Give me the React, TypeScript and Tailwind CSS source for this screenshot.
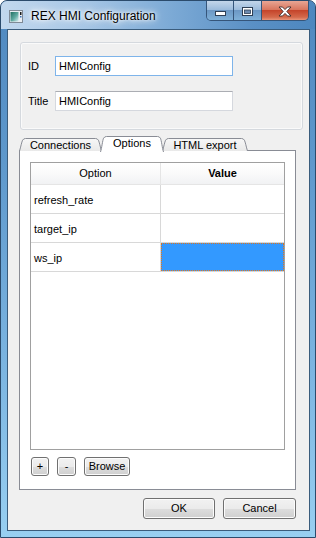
import React from "react";

const FONT = { fontFamily: '"Liberation Sans", Arial, sans-serif' };

function TabShape({ w, h, selected }: { w: number; h: number; selected?: boolean }) {
  const d = `M0.5 ${h} C1.8 ${h - 4} 2.6 4 3.6 2.2 Q4.6 0.5 6.5 0.5 H${w - 6.5} Q${w - 4.6} 0.5 ${w - 3.6} 2.2 C${w - 2.6} 4 ${w - 1.8} ${h - 4} ${w - 0.5} ${h}`;
  const id = selected ? "tabSel" : "tabIn";
  return (
    <svg className="absolute inset-0" width={w} height={h} viewBox={`0 0 ${w} ${h}`}>
      <defs>
        <linearGradient id={id} x1="0" y1="0" x2="0" y2="1">
          <stop offset="0" stopColor={selected ? "#ffffff" : "#f7f7f7"} />
          <stop offset="1" stopColor={selected ? "#ffffff" : "#e9e9e9"} />
        </linearGradient>
      </defs>
      <path d={d + ` V${h} H0.5 Z`} fill={`url(#${id})`} stroke="none" />
      <path d={d} fill="none" stroke="#898c95" strokeWidth="1" />
    </svg>
  );
}

function Tab({ label, w, selected, className }: { label: string; w: number; selected?: boolean; className?: string }) {
  const h = selected ? 16 : 13;
  return (
    <div className={`relative flex items-center justify-center ${className ?? ""}`} style={{ width: w, height: h }}>
      <TabShape w={w} h={h} selected={selected} />
      <span className={`relative text-[11px] leading-none text-black ${selected ? "-mt-[1px]" : "mt-[1px]"}`}>{label}</span>
    </div>
  );
}

function Btn({ children, className }: { children: React.ReactNode; className?: string }) {
  return (
    <div
      className={`flex items-center justify-center rounded-[3px] border border-[#707070] text-[11px] leading-none text-black bg-[linear-gradient(to_bottom,#f2f2f2_0%,#ebebeb_50%,#dddddd_51%,#cfcfcf_100%)] shadow-[inset_0_0_0_1px_#fcfcfc] ${className ?? ""}`}
    >
      {children}
    </div>
  );
}

function CaptionButtons() {
  return (
    <div className="flex h-[20px] self-start mr-[6px] rounded-b-[5px] border border-t-0 border-[#35557a] overflow-hidden">
      <div className="w-[27px] h-full flex items-center justify-center border-r border-[#35557a] bg-[linear-gradient(to_bottom,#c3d6ea_0%,#9dbcdc_45%,#6c98c5_50%,#7fb0d8_100%)]">
        <svg width="11" height="5" viewBox="0 0 11 5" className="mt-[5px]">
          <rect x="0.5" y="0.5" width="10" height="4" fill="#ffffff" stroke="#2e3f55" />
        </svg>
      </div>
      <div className="w-[28px] h-full flex items-center justify-center border-r border-[#35557a] bg-[linear-gradient(to_bottom,#c3d6ea_0%,#9dbcdc_45%,#6c98c5_50%,#7fb0d8_100%)]">
        <svg width="11" height="9" viewBox="0 0 11 9" className="mt-[1px]">
          <rect x="0.5" y="0.5" width="10" height="8" fill="#ffffff" stroke="#2e3f55" />
          <rect x="2.5" y="3" width="6" height="3.5" fill="#6d8bb0" stroke="#2e3f55" strokeWidth="0.8" />
        </svg>
      </div>
      <div className="w-[46px] h-full flex items-center justify-center bg-[linear-gradient(to_bottom,#e8a694_0%,#d9775f_45%,#c5452b_50%,#d4694b_85%,#e8957a_100%)]">
        <svg width="14" height="11" viewBox="0 0 14 11" className="mt-[1px]">
          <path
            d="M1 1 H4.5 L7 3.6 L9.5 1 H13 L8.8 5.5 L13 10 H9.5 L7 7.4 L4.5 10 H1 L5.2 5.5 Z"
            fill="#ffffff"
            stroke="#3b2a2a"
            strokeWidth="0.9"
            strokeLinejoin="round"
          />
        </svg>
      </div>
    </div>
  );
}

function AppIcon() {
  return (
    <svg width="14" height="13" viewBox="0 0 14 13">
      <defs>
        <linearGradient id="ai" x1="0" y1="0" x2="1" y2="1">
          <stop offset="0" stopColor="#1f6e60" />
          <stop offset="0.55" stopColor="#5fa9a0" />
          <stop offset="1" stopColor="#d8eef2" />
        </linearGradient>
      </defs>
      <rect x="0.5" y="0.5" width="13" height="12" fill="#e9eef2" stroke="#7f8a96" />
      <rect x="1.5" y="2" width="8" height="9.5" fill="url(#ai)" />
      <rect x="11" y="2" width="1.5" height="3" fill="#1b1b1b" />
      <rect x="11" y="6" width="1.5" height="1.5" fill="#3b6fb5" />
    </svg>
  );
}

export default function App() {
  const rows = ["refresh_rate", "target_ip", "ws_ip"];
  return (
    <div
      style={FONT}
      className="w-[316px] h-[538px] flex flex-col rounded-t-[7px] border border-[#2b4b6c] bg-[linear-gradient(to_bottom,#4f88bf_0%,#5e98cc_30%,#7db6e2_70%,#98cff1_100%)] overflow-hidden"
    >
      {/* Title bar */}
      <div className="h-[28px] flex items-center bg-[linear-gradient(to_right,#c2d8ee_0%,#a9c8e6_25%,#7ba9d5_55%,#5a90c5_80%,#4d87bf_100%)]">
        <div className="ml-[8px] mt-[2px] flex items-center">
          <AppIcon />
        </div>
        <span className="ml-[8px] mt-[1px] text-[12px] leading-none text-black [text-shadow:0_0_6px_#ffffff,0_0_10px_#ffffff,0_0_3px_#ffffff]">
          REX HMI Configuration
        </span>
        <div className="ml-auto self-start flex">
          <CaptionButtons />
        </div>
      </div>

      {/* Client area */}
      <div className="ml-[6px] mr-[5px] mb-[6px] flex-1 border border-[#3a5c7c] bg-[#f0f0f0] flex flex-col">
        {/* Group box */}
        <div className="ml-[12px] mt-[12px] w-[283px] h-[88px] rounded-[3px] border border-[#d5d9de] shadow-[inset_0_0_0_1px_#fafafa] flex flex-col">
          <div className="flex items-center mt-[13px] pl-[7px]">
            <span className="w-[27px] text-[11px] leading-none text-black">ID</span>
            <div className="w-[178px] h-[20px] border border-[#7eb4ea] bg-white flex items-center pl-[3px] text-[11px] leading-none text-black">
              HMIConfig
            </div>
          </div>
          <div className="flex items-center mt-[15px] pl-[7px]">
            <span className="w-[27px] text-[11px] leading-none text-black">Title</span>
            <div className="w-[178px] h-[20px] border border-[#d5d8de] border-t-[#abadb3] bg-white flex items-center pl-[3px] text-[11px] leading-none text-black">
              HMIConfig
            </div>
          </div>
        </div>

        {/* Tabs */}
        <div className="ml-[11px] mt-[6px] h-[15px] flex items-end relative z-10">
          <Tab label="Connections" w={83} className="mb-[0px]" />
          <Tab label="Options" w={64} selected className="-ml-[2px] -mb-[1px] z-10" />
          <Tab label="HTML export" w={86} className="-ml-[2px]" />
        </div>

        {/* Tab pane */}
        <div className="ml-[11px] -mt-[1px] w-[277px] h-[340px] border border-[#898c95] bg-white flex flex-col">
          <div className="ml-[10px] mt-[11px] w-[255px] h-[288px] border border-[#a0a0a0] bg-white flex flex-col">
            {/* header */}
            <div className="flex h-[22px] border-b border-[#e5e5e5] bg-[linear-gradient(to_bottom,#ffffff_0%,#fafafa_50%,#f1f2f4_100%)]">
              <div className="w-[130px] border-r border-[#e5e5e5] flex items-center justify-center text-[11px] leading-none text-black">
                Option
              </div>
              <div className="flex-1 flex items-center justify-center text-[11px] leading-none font-bold text-black">
                Value
              </div>
            </div>
            {rows.map((r, i) => (
              <div key={r} className="flex h-[29px] border-b border-[#d8d8d8]">
                <div className="w-[130px] border-r border-[#d8d8d8] flex items-center pl-[3px] pt-[2px] text-[11px] leading-none text-black">
                  {r}
                </div>
                <div className="flex-1 flex">
                  {i === 2 && (
                    <div className="flex-1 bg-[#3399ff] border border-dotted border-[#e0761e]" />
                  )}
                </div>
              </div>
            ))}
          </div>
          <div className="flex items-center mt-[7px] ml-[11px]">
            <Btn className="w-[18px] h-[19px]">+</Btn>
            <Btn className="ml-[8px] w-[19px] h-[19px]">-</Btn>
            <Btn className="ml-[8px] w-[46px] h-[19px]">Browse</Btn>
          </div>
        </div>

        {/* Dialog buttons */}
        <div className="flex justify-end mt-[8px] mr-[13px]">
          <Btn className="w-[72px] h-[21px]">OK</Btn>
          <Btn className="ml-[8px] w-[73px] h-[21px]">Cancel</Btn>
        </div>
      </div>
    </div>
  );
}
